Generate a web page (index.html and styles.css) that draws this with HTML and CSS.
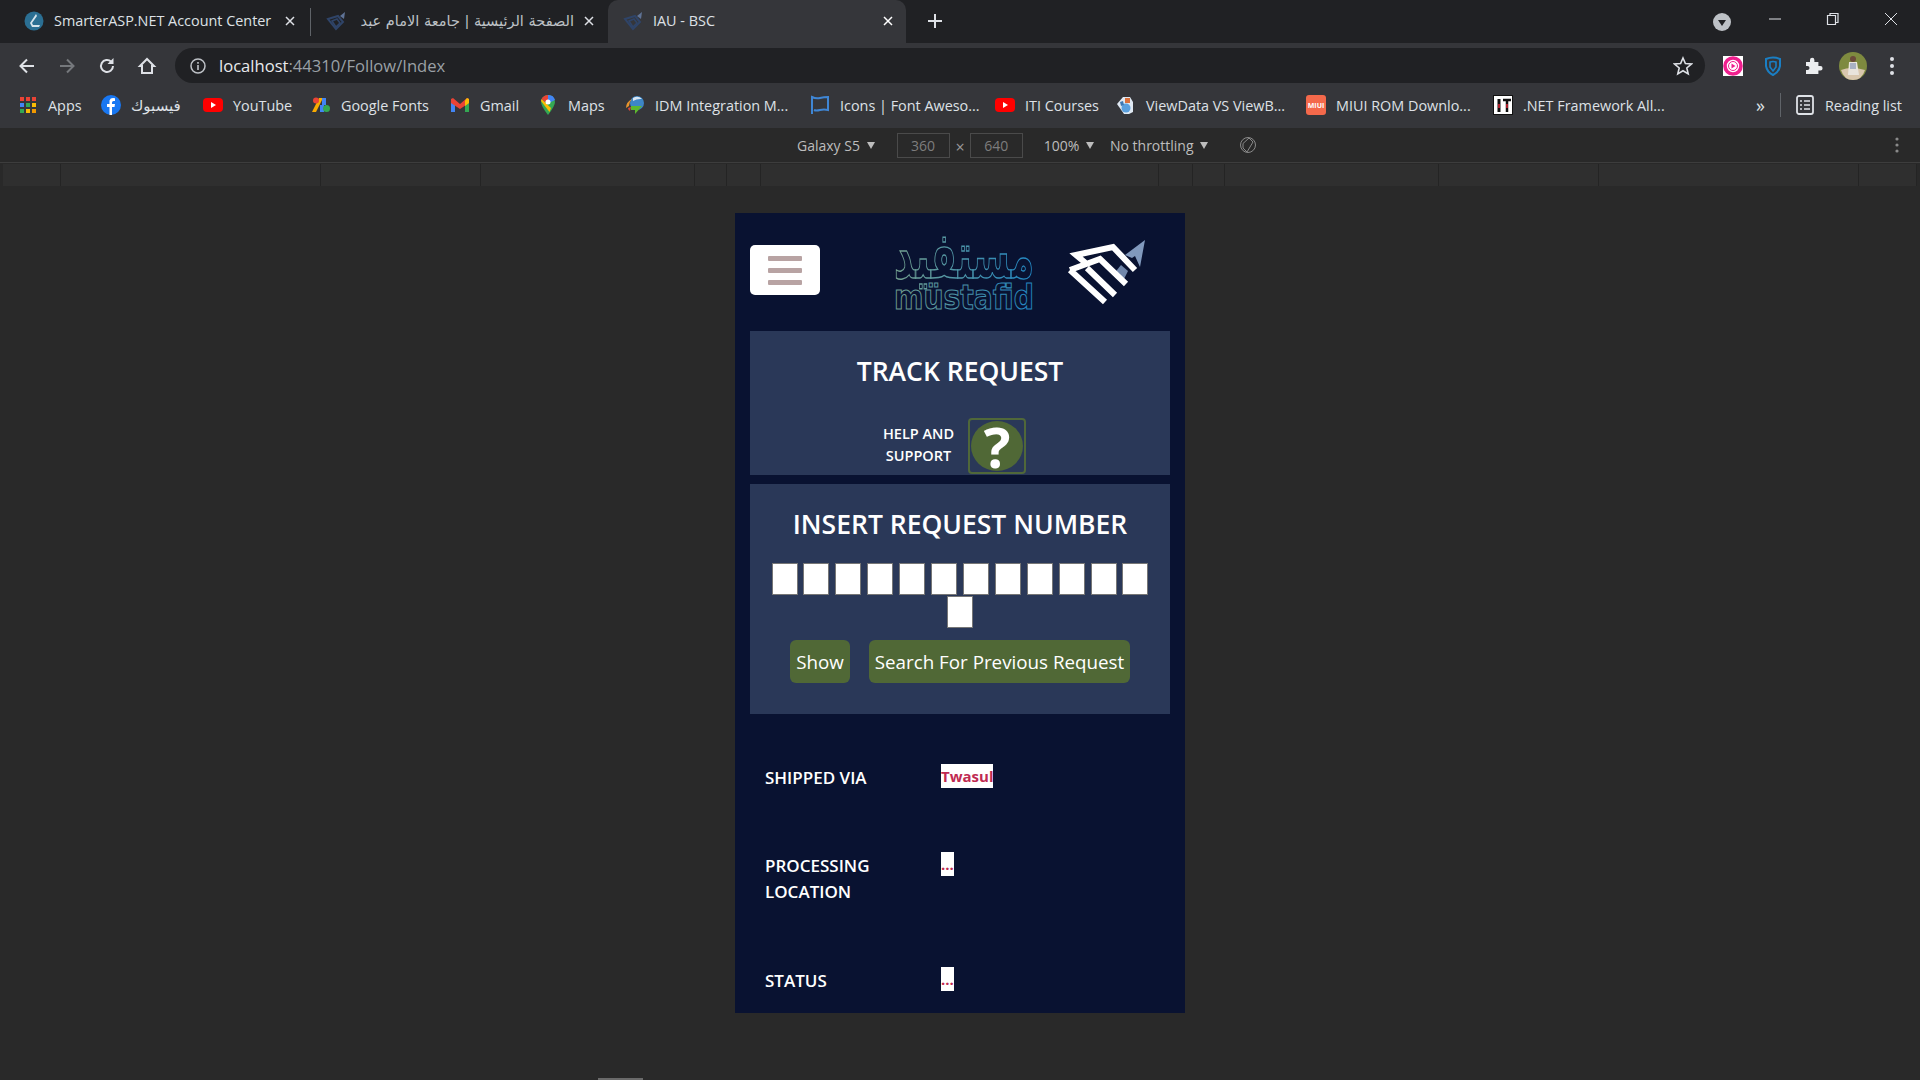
FILE: index.html
```html
<!DOCTYPE html>
<html lang="en">
<head>
    <meta charset="UTF-8">
    <title>IAU - BSC</title>
    <link rel="stylesheet" href="styles.css">
</head>
<body>

<!-- Browser tabs -->
<div class="tabstrip">
    <div class="tab tab-first">
        <svg class="favicon" viewBox="0 0 20 20"><circle cx="10" cy="10" r="9.500" fill="#2b6f93"/><path d="M12 3 6 12l2 4h7l1-2H9l-1-2 5-7z" fill="#d5e4ec"/></svg>
        <span class="tab-title">SmarterASP.NET Account Center</span>
        <svg class="tab-close" viewBox="0 0 10 10"><path d="M1 1l8 8M9 1 1 9" stroke="#dee1e6" stroke-width="1.500"/></svg>
    </div>
    <div class="tab-sep"></div>
    <div class="tab tab-second">
        <svg class="favicon" viewBox="0 0 20 20"><path d="M2 8 12 5l5 6-7 7z" fill="none" stroke="#2f4468" stroke-width="2"/><path d="M6 10l5-2 3 4-4 4z" fill="none" stroke="#2f4468" stroke-width="1.500"/><path d="M19 1l-1 7-4-3z" fill="#5f7396"/></svg>
        <span class="tab-title tab-arabic" dir="rtl">الصفحة الرئيسية | جامعة الامام عبد</span>
        <svg class="tab-close" viewBox="0 0 10 10"><path d="M1 1l8 8M9 1 1 9" stroke="#dee1e6" stroke-width="1.500"/></svg>
    </div>
    <div class="tab tab-active">
        <svg class="favicon" viewBox="0 0 20 20"><path d="M2 8 12 5l5 6-7 7z" fill="none" stroke="#2f4468" stroke-width="2"/><path d="M6 10l5-2 3 4-4 4z" fill="none" stroke="#2f4468" stroke-width="1.500"/><path d="M19 1l-1 7-4-3z" fill="#5f7396"/></svg>
        <span class="tab-title">IAU - BSC</span>
        <svg class="tab-close" viewBox="0 0 10 10"><path d="M1 1l8 8M9 1 1 9" stroke="#fff" stroke-width="1.500"/></svg>
    </div>
    <svg class="new-tab" viewBox="0 0 16 16"><path d="M8 1v14M1 8h14" stroke="#dee1e6" stroke-width="2"/></svg>
    <div class="window-controls">
        <svg class="tab-search" viewBox="0 0 18 18"><circle cx="9" cy="9" r="9" fill="#bdc1c6"/><path d="M5 7h8l-4 6z" fill="#202124"/></svg>
        <svg class="win-btn" viewBox="0 0 14 14"><path d="M1 7h12" stroke="#dee1e6" stroke-width="1"/></svg>
        <svg class="win-btn" viewBox="0 0 14 14"><path d="M1.500 3.500h8v9h-8zM4 3.500V1.500h8v9h-2.500" fill="none" stroke="#dee1e6" stroke-width="1.200"/></svg>
        <svg class="win-btn" viewBox="0 0 14 14"><path d="M1 1l12 12M13 1 1 13" stroke="#dee1e6" stroke-width="1"/></svg>
    </div>
</div>

<!-- Address bar -->
<div class="toolbar">
    <svg class="nav-icon" viewBox="0 0 20 20"><path d="M17 10H4M10 3.500 3.500 10l6.500 6.500" fill="none" stroke="#dee1e6" stroke-width="2"/></svg>
    <svg class="nav-icon" viewBox="0 0 20 20"><path d="M3 10h13M10 3.500l6.500 6.500-6.500 6.500" fill="none" stroke="#75787c" stroke-width="2"/></svg>
    <svg class="nav-icon" viewBox="0 0 20 20"><path d="M16 10a6 6 0 1 1-1.800-4.300" fill="none" stroke="#dee1e6" stroke-width="2"/><path d="M16.500 2v6h-6z" fill="#dee1e6"/></svg>
    <svg class="nav-icon" viewBox="0 0 20 20"><path d="M3 10 10 3l7 7h-2v7H5v-7z" fill="none" stroke="#dee1e6" stroke-width="2"/></svg>
    <div class="omnibox">
        <svg class="info-icon" viewBox="0 0 16 16"><circle cx="8" cy="8" r="7" fill="none" stroke="#bdc1c6" stroke-width="1.500"/><path d="M8 7v5M8 4v1.800" stroke="#bdc1c6" stroke-width="1.600"/></svg>
        <span class="url"><span class="url-host">localhost</span>:44310/Follow/Index</span>
        <svg class="star" viewBox="0 0 20 20"><path d="M10 2l2.400 5.500 6 .5-4.600 4 1.400 5.900L10 14.800 4.800 17.900 6.200 12 1.600 8l6-.5z" fill="none" stroke="#dee1e6" stroke-width="1.600"/></svg>
    </div>
    <div class="ext-icons">
        <svg class="ext" viewBox="0 0 20 20"><rect width="20" height="20" fill="#fff"/><circle cx="10" cy="10" r="8" fill="none" stroke="#f01f8e" stroke-width="3.600"/><circle cx="10" cy="10" r="4.500" fill="none" stroke="#f01f8e" stroke-width="1"/><path d="M8.500 7.500v5l4-2.500z" fill="#f01f8e"/></svg>
        <svg class="ext" viewBox="0 0 20 20"><path d="M3 3q7-3 14 0v7q-1 6-7 9-6-3-7-9z" fill="none" stroke="#1a7fc4" stroke-width="2"/><path d="M7 6q3-1 6 0v5l-3 4-3-4z" fill="none" stroke="#1a7fc4" stroke-width="1.600"/></svg>
        <svg class="ext" viewBox="0 0 20 20"><path d="M3 6h4V4a2.200 2.200 0 0 1 4.400 0v2h4v4h2a2.200 2.200 0 0 1 0 4.400h-2V18H3v-4h1.500a2 2 0 0 0 0-4H3z" fill="#eceef0"/></svg>
        <svg class="ext" viewBox="0 0 28 28"><circle cx="14" cy="14" r="14" fill="#7e8a3f"/><path d="M2 18q10-4 24 0-3 10-12 10T2 18z" fill="#d9c7ae"/><circle cx="14" cy="7" r="3" fill="#6b4a3a"/><path d="M10 10h8l2 13H9z" fill="#e9e4dc"/><path d="M11 11h6v6h-6z" fill="#a9b1c4"/></svg>
        <svg class="ext-menu" viewBox="0 0 4 18"><circle cx="2" cy="2" r="2" fill="#dee1e6"/><circle cx="2" cy="9" r="2" fill="#dee1e6"/><circle cx="2" cy="16" r="2" fill="#dee1e6"/></svg>
    </div>
</div>

<!-- Bookmarks -->
<div class="bookmarks">
    <div class="bm"><svg class="bm-icon" viewBox="0 0 20 20"><path d="M2 2h4v4H2z" fill="#ea4335"/><path d="M8 2h4v4H8z" fill="#ea4335"/><path d="M14 2h4v4h-4z" fill="#ea4335"/><path d="M2 8h4v4H2z" fill="#4285f4"/><path d="M8 8h4v4H8z" fill="#34a853"/><path d="M14 8h4v4h-4z" fill="#fbbc05"/><path d="M2 14h4v4H2z" fill="#34a853"/><path d="M8 14h4v4H8z" fill="#fbbc05"/><path d="M14 14h4v4h-4z" fill="#f29900"/></svg>Apps</div>
    <div class="bm"><svg class="bm-icon" viewBox="0 0 20 20"><circle cx="10" cy="10" r="10" fill="#1877f2"/><path d="M11 20v-8h2.500l.5-3h-3V7.500q0-1.500 1.500-1.500H14V3.300q-4.500-1-5.500 2.200V9H6v3h2.500v8z" fill="#fff"/></svg><span class="bm-arabic" dir="rtl">فيسبوك</span></div>
    <div class="bm"><svg class="bm-icon" viewBox="0 0 20 20"><rect y="3" width="20" height="14" rx="4" fill="#f00"/><path d="M8 7v6l5-3z" fill="#fff"/></svg>YouTube</div>
    <div class="bm"><svg class="bm-icon" viewBox="0 0 20 20"><path d="M1 17 8 3h4L5 17z" fill="#f9ab00"/><path d="M11 3h4v7h-4z" fill="#4285f4"/><path d="M9 10h4v7H9z" fill="#4285f4"/><circle cx="15.500" cy="13.500" r="3.500" fill="#34a853"/><circle cx="5" cy="5.500" r="3" fill="#ea4335"/></svg>Google Fonts</div>
    <div class="bm"><svg class="bm-icon" viewBox="0 0 20 20"><path d="M1 4v13h4V8.500z" fill="#4285f4"/><path d="M19 4v13h-4V8.500z" fill="#34a853"/><path d="M1 4l2-1 7 6 7-6 2 1v4l-9 6-9-6z" fill="#ea4335"/><path d="M15 5.500 17 3l2 1v4l-4 3z" fill="#fbbc05"/></svg>Gmail</div>
    <div class="bm"><svg class="bm-icon" viewBox="0 0 20 20"><path d="M10 0a7 7 0 0 1 7 7q0 4-7 13Q3 11 3 7a7 7 0 0 1 7-7z" fill="#34a853"/><path d="M3.500 4 13 13l-1.500 4L3 6z" fill="#fbbc05"/><path d="M10 0a7 7 0 0 1 7 5l-4 2H10z" fill="#4285f4"/><path d="M10 0q-4 0-6.500 4L7 7h3z" fill="#ea4335"/><circle cx="10" cy="7" r="2.500" fill="#fff"/></svg>Maps</div>
    <div class="bm"><svg class="bm-icon" viewBox="0 0 20 20"><circle cx="12" cy="8" r="7" fill="#3d86c6"/><path d="M8 3q5-3 9 1-5-.5-9 2z" fill="#d8e6f2"/><path d="M1 13q0-6 6-9-3 3-3 7z" fill="#e8942c"/><path d="M3 13q0 2 2 3l1-4z" fill="#d84a3a"/><path d="M6 11h11l-7 8v-4H6z" fill="#5cb82e"/></svg>IDM Integration M...</div>
    <div class="bm"><svg class="bm-icon" viewBox="0 0 20 20"><path d="M2 19V2q4 2 8 1t8-1v13q-4-1-8 0t-6 0" fill="none" stroke="#3f86d4" stroke-width="2"/></svg>Icons | Font Aweso...</div>
    <div class="bm"><svg class="bm-icon" viewBox="0 0 20 20"><rect y="3" width="20" height="14" rx="4" fill="#f00"/><path d="M8 7v6l5-3z" fill="#fff"/></svg>ITI Courses</div>
    <div class="bm"><svg class="bm-icon" viewBox="0 0 20 20"><path d="M1 9l6-7h7l3 5v10l-4 2H8z" fill="#dfe8f2"/><circle cx="10" cy="13" r="4.500" fill="#5aa0de"/><path d="M9 3h5v5H9z" fill="#d9703c"/><path d="M4 7l3-1 1 4-3 1z" fill="#3d78b4"/></svg>ViewData VS ViewB...</div>
    <div class="bm"><svg class="bm-icon" viewBox="0 0 20 20"><rect width="20" height="20" rx="3" fill="#f4694b"/><text class="miui-mark" x="10" y="12.500" text-anchor="middle">MIUI</text></svg>MIUI ROM Downlo...</div>
    <div class="bm"><svg class="bm-icon" viewBox="0 0 20 20"><rect width="20" height="20" fill="#111"/><rect x="1" y="1" width="18" height="18" fill="#fff"/><path d="M6 4v13" stroke="#111" stroke-width="3"/><path d="M10 5h8M14 5v12" stroke="#111" stroke-width="2.500"/><path d="M6 9v4M14 9v4" stroke="#d23" stroke-width="1.500"/></svg>.NET Framework All...</div>
    <div class="bm-end">
        <span class="bm-more">&raquo;</span>
        <span class="bm-sep"></span>
        <div class="bm"><svg class="bm-icon" viewBox="0 0 20 20"><rect x="2" y="1" width="16" height="18" rx="2" fill="none" stroke="#dee1e6" stroke-width="1.800"/><path d="M5 6h2M9 6h6M5 10h2M9 10h6M5 14h2M9 14h6" stroke="#dee1e6" stroke-width="1.600"/></svg>Reading list</div>
    </div>
</div>

<!-- Device toolbar -->
<div class="device-bar">
    <span class="dev-select">Galaxy S5 <i class="caret"></i></span>
    <span class="dev-size dev-width">360</span>
    <span class="dev-x">&times;</span>
    <span class="dev-size">640</span>
    <span class="dev-select dev-zoom">100% <i class="caret"></i></span>
    <span class="dev-select dev-net">No throttling <i class="caret"></i></span>
    <svg class="dev-rotate" viewBox="0 0 18 18"><circle cx="9" cy="9" r="7.500" fill="none" stroke="#8a8a8a" stroke-width="1"/><path d="M4 7.500 10 2l4 4-6 10-4-4z" fill="#292929" stroke="#8a8a8a" stroke-width="1"/></svg>
    <svg class="dev-menu" viewBox="0 0 4 16"><circle cx="2" cy="2" r="1.600" fill="#8a8a8a"/><circle cx="2" cy="8" r="1.600" fill="#8a8a8a"/><circle cx="2" cy="14" r="1.600" fill="#8a8a8a"/></svg>
</div>
<div class="ruler">
    <div></div><div></div><div></div><div></div><div></div><div></div><div></div>
    <div></div><div></div><div></div><div></div><div></div><div></div>
</div>

<!-- Emulated phone viewport -->
<div class="stage">
    <div class="phone">
        <header class="phone-head">
            <button class="menu-btn"><span></span><span></span><span></span></button>
            <svg class="logo-word" viewBox="0 0 142 80">
                <defs>
                    <linearGradient id="logoGrad" gradientUnits="userSpaceOnUse" x1="-71" x2="71" y1="0" y2="0">
                        <stop offset="0" stop-color="#74a08e"/>
                        <stop offset="1" stop-color="#2086c4"/>
                    </linearGradient>
                </defs>
                <text class="logo-ar" transform="translate(71 46) scale(1 1.7)" text-anchor="middle" textLength="140" lengthAdjust="spacingAndGlyphs">مستفيد</text>
                <text class="logo-en" transform="translate(71 77) scale(1 1.35)" text-anchor="middle" textLength="140" lengthAdjust="spacingAndGlyphs">müstafid</text>
            </svg>
            <svg class="logo-mark" viewBox="0 0 95 80">
                <path d="M85 8 65 23l7 3 3-2 5 11z" fill="#8199bd"/>
                <path d="M53 43l8-10 7 6-6 12z" fill="#7187ab"/>
                <path d="M28 33 16 23l37-8 22 23M10 38l30-11 26 25M10 38l35 32M27 36l28 27" fill="none" stroke="#fff" stroke-width="6"/>
            </svg>
        </header>

        <section class="card card-track">
            <h2 class="card-title">TRACK REQUEST</h2>
            <div class="help">
                <span class="help-text">HELP AND<br>SUPPORT</span>
                <span class="help-btn"><span class="help-circle">?</span></span>
            </div>
        </section>

        <section class="card card-insert">
            <h2 class="card-title">INSERT REQUEST NUMBER</h2>
            <div class="digits">
                <input class="digit"><input class="digit"><input class="digit"><input class="digit">
                <input class="digit"><input class="digit"><input class="digit"><input class="digit">
                <input class="digit"><input class="digit"><input class="digit"><input class="digit">
                <input class="digit">
            </div>
            <div class="actions">
                <button class="btn btn-show">Show</button>
                <button class="btn btn-search">Search For Previous Request</button>
            </div>
        </section>

        <div class="info-row info-ship">
            <div class="info-label">SHIPPED VIA</div>
            <div><span class="info-value">Twasul</span></div>
        </div>
        <div class="info-row info-loc">
            <div class="info-label">PROCESSING LOCATION</div>
            <div><span class="info-value">...</span></div>
        </div>
        <div class="info-row info-status">
            <div class="info-label">STATUS</div>
            <div><span class="info-value">...</span></div>
        </div>
    </div>
</div>
<div class="scroll-thumb"></div>

</body>
</html>
```

FILE: styles.css
```css
html, body {
    margin: 0;
    height: 1080px;
    overflow: hidden;
}

body {
    background-color: #292929;
    font-family: "Open Sans", "DejaVu Sans", sans-serif;
    color: #fff;
}

/* Browser tabs */
.tabstrip {
    display: flex;
    align-items: stretch;
    height: 43px;
    background-color: #202124;
    color: #dee1e6;
    font-size: 14.4px;
}

.tab {
    display: flex;
    align-items: center;
    box-sizing: border-box;
    padding-bottom: 2px;
    white-space: nowrap;
    overflow: hidden;
}

.tab-first {
    width: 310px;
    padding-left: 24px;
    padding-right: 15px;
}

.tab-sep {
    width: 1px;
    height: 28px;
    margin-top: 8px;
    background-color: #5f6368;
}

.tab-second {
    width: 289px;
    padding-left: 15px;
    padding-right: 6px;
}

.tab-active {
    width: 298px;
    margin-left: 8px;
    padding-left: 15px;
    padding-right: 13px;
    background-color: #35363a;
    border-radius: 10px 10px 0 0;
}

.favicon {
    width: 20px;
    height: 20px;
    flex: none;
    margin-right: 10px;
}

.tab-title {
    flex: 1;
    overflow: hidden;
}

.tab-arabic {
    font-family: "DejaVu Sans", sans-serif;
    font-size: 14.5px;
    color: #bdc1c6;
}

.tab-close {
    width: 10px;
    height: 10px;
    flex: none;
    margin-left: 10px;
}

.new-tab {
    width: 16px;
    height: 16px;
    margin: 13px 0 0 21px;
}

.window-controls {
    display: flex;
    align-items: center;
    margin-left: auto;
    padding-right: 22px;
    gap: 44px;
}

.tab-search {
    width: 18px;
    height: 18px;
    margin-right: -7px;
}

.win-btn {
    width: 14px;
    height: 14px;
    margin-bottom: 6px;
}

/* Address bar */
.toolbar {
    display: flex;
    align-items: center;
    height: 41px;
    padding-top: 4px;
    padding-left: 17px;
    box-sizing: border-box;
    background-color: #35363a;
}

.nav-icon {
    width: 20px;
    height: 20px;
    margin-right: 20px;
}

.omnibox {
    display: flex;
    align-items: center;
    width: 1530px;
    height: 35px;
    margin-left: -2px;
    padding: 0 12px 0 15px;
    box-sizing: border-box;
    border-radius: 18px;
    background-color: #202124;
}

.info-icon {
    width: 16px;
    height: 16px;
    margin-right: 13px;
}

.url {
    flex: 1;
    font-size: 16.6px;
    color: #9aa0a6;
}

.url-host {
    color: #e8eaed;
}

.star {
    width: 20px;
    height: 20px;
}

.ext-icons {
    display: flex;
    align-items: center;
    gap: 20px;
    margin-left: 18px;
}

.ext {
    width: 20px;
    height: 20px;
}

.ext:nth-child(4) {
    width: 28px;
    height: 28px;
    margin-left: -4px;
}

.ext-menu {
    width: 4px;
    height: 18px;
    margin-left: 3px;
}

/* Bookmarks */
.bookmarks {
    display: grid;
    grid-template-columns: 83px 102px 108px 139px 88px 87px 185px 185px 121px 190px 187px 1fr auto;
    align-items: center;
    height: 44px;
    padding-left: 18px;
    padding-bottom: 2px;
    box-sizing: border-box;
    background-color: #35363a;
    color: #dee1e6;
    font-size: 14.4px;
    white-space: nowrap;
}

.bm {
    display: flex;
    align-items: center;
}

.bm-icon {
    width: 20px;
    height: 20px;
    flex: none;
    margin-right: 10px;
}

.bm-arabic {
    font-size: 15px;
}

.miui-mark {
    fill: #fff;
    font-size: 7px;
    font-weight: 700;
}

.bm-end {
    display: flex;
    align-items: center;
    padding-right: 18px;
}

.bm-more {
    font-size: 18px;
    margin-left: 3px;
}

.bm-sep {
    width: 1px;
    height: 24px;
    margin: 0 14px 0 15px;
    background-color: #5f6368;
}

/* Device toolbar */
.device-bar {
    display: flex;
    align-items: center;
    height: 34px;
    padding-left: 797px;
    background-color: #292929;
    border-bottom: 1px solid #3d3d3d;
    color: #bdbdbd;
    font-size: 14px;
}

.dev-select {
    white-space: nowrap;
}

.caret {
    display: inline-block;
    margin: 0 0 2px 3px;
    border-left: 4px solid transparent;
    border-right: 4px solid transparent;
    border-top: 7px solid #bdbdbd;
}

.dev-size {
    width: 51px;
    height: 23px;
    line-height: 23px;
    text-align: center;
    border: 1px solid #4a4a4a;
    color: #7d7d7d;
}

.dev-width {
    margin-left: 22px;
}

.dev-x {
    margin: 4px 5px 0 6px;
    font-size: 16px;
    color: #9a9a9a;
}

.dev-zoom {
    margin-left: 21px;
}

.dev-net {
    margin-left: 16px;
}

.dev-rotate {
    width: 18px;
    height: 18px;
    margin-left: 31px;
}

.dev-menu {
    width: 4px;
    height: 16px;
    margin-left: auto;
    margin-right: 21px;
}

.ruler {
    display: grid;
    grid-template-columns: 58px 260px 160px 214px 32px 34px 398px 34px 32px 214px 160px 260px 58px;
    height: 22px;
    margin-top: 1px;
    padding: 0 3px;
    background-color: #292929;
}

.ruler div {
    background-color: #2f2f2f;
    border-right: 1px solid #242424;
}

/* Emulated phone viewport */
.stage {
    display: flex;
    justify-content: center;
    padding-top: 27px;
}

.phone {
    width: 450px;
    height: 800px;
    padding: 0 15px;
    box-sizing: border-box;
    background-color: #091231;
}

.phone-head {
    display: flex;
    align-items: center;
    height: 118px;
    padding-bottom: 4px;
    box-sizing: border-box;
}

.menu-btn {
    display: flex;
    flex-direction: column;
    align-items: center;
    justify-content: center;
    gap: 7px;
    width: 70px;
    height: 50px;
    padding: 0;
    border: none;
    border-radius: 5px;
    background-color: #fff;
}

.menu-btn span {
    width: 34px;
    height: 5px;
    border-radius: 1px;
    background-color: #b8a3a3;
}

.logo-word {
    width: 142px;
    height: 80px;
    margin: 4px 0 0 73px;
    overflow: visible;
}

.logo-word text {
    fill: none;
    stroke: url(#logoGrad);
    stroke-width: 0.8;
    font-family: "DejaVu Sans", sans-serif;
    font-weight: bold;
}

.logo-ar {
    font-size: 38px;
}

.logo-en {
    font-size: 25px;
}

.logo-mark {
    width: 95px;
    height: 80px;
    margin: 4px 0 0 25px;
}

.card {
    background-color: #2a3858;
    text-align: center;
}

.card-track {
    height: 144px;
    padding-top: 22px;
    box-sizing: border-box;
}

.card-insert {
    height: 230px;
    margin-top: 9px;
    padding-top: 22px;
    box-sizing: border-box;
}

.card-title {
    margin: 0;
    font-size: 26.5px;
    font-weight: 600;
    line-height: 36px;
}

.help {
    display: flex;
    justify-content: center;
    align-items: flex-end;
    gap: 14px;
    margin-top: 29px;
    margin-right: 11px;
}

.help-text {
    font-size: 14.5px;
    font-weight: 600;
    line-height: 22px;
    padding-bottom: 7px;
}

.help-btn {
    display: flex;
    align-items: center;
    justify-content: center;
    width: 58px;
    height: 56px;
    box-sizing: border-box;
    border: 2px solid #50683a;
    border-radius: 4px;
}

.help-circle {
    width: 52px;
    height: 50px;
    border-radius: 50%;
    background-color: #506836;
    font-size: 56px;
    font-weight: 700;
    line-height: 50px;
}

.digits {
    display: flex;
    flex-wrap: wrap;
    justify-content: center;
    column-gap: 5.9px;
    row-gap: 1px;
    margin-top: 21px;
    padding: 0 20px;
}

.digit {
    width: 26px;
    height: 32px;
    padding: 0;
    box-sizing: border-box;
    border: 1px solid #767676;
    background-color: #fff;
}

.actions {
    display: flex;
    justify-content: center;
    gap: 19px;
    margin-top: 12px;
}

.btn {
    height: 43px;
    padding: 0;
    border: none;
    border-radius: 6px;
    background-color: #506836;
    color: #fff;
    font-family: inherit;
    font-size: 18.8px;
}

.btn-show {
    width: 60px;
}

.btn-search {
    width: 261px;
}

.info-row {
    display: flex;
    padding-left: 15px;
}

.info-label {
    width: 176px;
    flex: none;
    padding-top: 1px;
    padding-right: 40px;
    box-sizing: border-box;
    font-size: 17px;
    font-weight: 600;
    line-height: 26px;
}

.info-value {
    display: inline-block;
    height: 24px;
    background-color: #fff;
    color: #bf2a52;
    font-size: 15px;
    font-weight: 700;
    line-height: 24px;
}

.info-ship {
    margin-top: 50px;
}

.info-loc {
    margin-top: 61px;
}

.info-status {
    margin-top: 62px;
}

.scroll-thumb {
    position: absolute;
    left: 598px;
    top: 1078px;
    width: 45px;
    height: 2px;
    background-color: #6a6a6a;
}
```
